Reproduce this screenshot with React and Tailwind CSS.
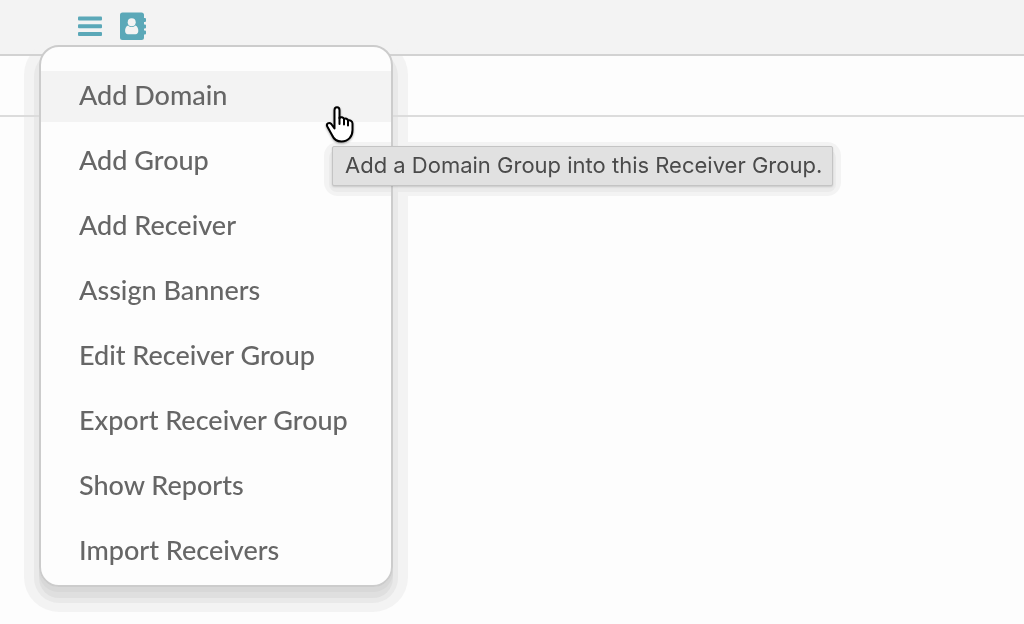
import React from "react";

const items = [
  "Add Domain",
  "Add Group",
  "Add Receiver",
  "Assign Banners",
  "Edit Receiver Group",
  "Export Receiver Group",
  "Show Reports",
  "Import Receivers",
];

function BarsIcon() {
  return (
    <svg width="24" height="20" viewBox="0 0 24 20" fill="currentColor" aria-hidden="true">
      <rect x="0" y="0.500" width="24" height="4" rx="1" />
      <rect x="0" y="8.300" width="24" height="4" rx="1" />
      <rect x="0" y="16" width="24" height="4" rx="1" />
    </svg>
  );
}

function AddressBookIcon() {
  return (
    <svg width="26" height="28" viewBox="0 0 26 28" aria-hidden="true">
      <path
        fill="currentColor"
        d="M2.500 .5H21.500A2.500 2.500 0 0 1 24 3V6H25A1 1 0 0 1 26 7V9A1 1 0 0 1 25 10H24V12.500H25A1 1 0 0 1 26 13.500V15.500A1 1 0 0 1 25 16.500H24V18.500H25A1 1 0 0 1 26 19.500V21.500A1 1 0 0 1 25 22.500H24V25.500A2.500 2.500 0 0 1 21.500 28H2.500A2.500 2.500 0 0 1 0 25.500V3A2.500 2.500 0 0 1 2.500 .5Z"
      />
      <circle cx="11.700" cy="10.200" r="4" fill="#f3f3f3" />
      <path
        fill="#f3f3f3"
        d="M8.100 13.400C5.800 13.900 5.100 16.700 5.100 19C5.100 20.900 6.200 22.200 7.800 22.200H15.600C17.200 22.200 18.300 20.900 18.300 19C18.300 16.700 17.600 13.900 15.300 13.400C13.300 15.400 10.100 15.400 8.100 13.400Z"
      />
    </svg>
  );
}

function HandCursor() {
  return (
    <svg
      className="pointer-events-none absolute left-[286px] top-[59px] drop-shadow-[0_1px_1px_rgba(0,0,0,0.35)]"
      width="30"
      height="40"
      viewBox="0 0 30 40"
      fill="none"
      aria-hidden="true"
    >
      <path
        d="M9.500 24.500V6.200C9.500 2.400 14.500 2.400 14.500 6.200V14.200C15.500 12.500 18.700 13 19 15.200C20.300 14 22.800 14.700 23 16.600C25 15.800 27.500 17 27.500 19.500V26C27.500 32.500 23.500 37.500 16.500 37.500C11 37.500 8.500 34.500 7 31L2.300 22.500C.8 19.500 4.200 17.800 6.300 20L9.500 24.500Z"
        fill="#fff"
        stroke="#000"
        strokeWidth="2"
        strokeLinejoin="round"
      />
      <path d="M14.500 13.500V20M19 15V20.500M23 16.500V21.500" stroke="#000" strokeWidth="2" strokeLinecap="round" />
    </svg>
  );
}

export default function App() {
  return (
    <div className="min-h-screen bg-[#fdfdfd] font-['Lato',sans-serif]">
      <header className="h-14 border-b-2 border-[#d2d2d2] bg-[#f3f3f3] pl-[78px]">
        <nav className="relative flex items-start gap-[18px] pt-3 text-[#5ba8b8]">
          <button type="button" aria-label="Menu" aria-expanded="true" className="mt-1 block">
            <BarsIcon />
          </button>
          <button type="button" aria-label="Contacts" className="block">
            <AddressBookIcon />
          </button>
          <div className="absolute -left-[39px] top-[45px] w-[354px]">
            <div className="absolute inset-0 rounded-[20px] mix-blend-darken shadow-[0_5px_0_0_#d8d8d8,0_11px_0_0_#dfdfdf,0_11px_0_5px_#e9e9e9,0_10px_0_15px_#f3f3f3]" />
            <ul className="relative flex flex-col gap-3.5 overflow-hidden rounded-[20px] border-2 border-[#cccccc] bg-[#fdfdfd] pb-2 pt-6 text-[27px] font-medium text-[#666666]">
              {items.map((label, index) => (
                <li key={label}>
                  <button
                    type="button"
                    className={
                      index === 0
                        ? "block w-full bg-[#f3f3f3] pb-1 pl-[38px] text-left leading-[47px]"
                        : "block w-full pb-1 pl-[38px] text-left leading-[47px] hover:bg-[#f3f3f3]"
                    }
                  >
                    {label}
                  </button>
                </li>
              ))}
            </ul>
            <div className="absolute left-[293px] top-[101px]">
              <div className="absolute -bottom-2.5 -left-2 -right-2 -top-1 rounded-[14px] bg-[#f3f3f3] mix-blend-darken" />
              <div className="absolute -bottom-1.5 -left-[3px] -right-[3px] top-1 rounded-[8px] bg-[#ebebeb] mix-blend-darken" />
              <div
                role="tooltip"
                className="relative whitespace-nowrap rounded-[2px] border border-[#c4c4c4] bg-[#e1e1e1] pb-0.5 pl-3 pr-2.5 font-['Inter',sans-serif] text-[22px] leading-9 text-[#4a4a4a] shadow-[0_1px_2px_0_rgba(0,0,0,0.15)]"
              >
                Add a Domain Group into this Receiver Group.
              </div>
            </div>
            <HandCursor />
          </div>
        </nav>
      </header>
      <div className="h-[61px] border-b-2 border-[#dcdcdc]" />
      <main />
    </div>
  );
}
